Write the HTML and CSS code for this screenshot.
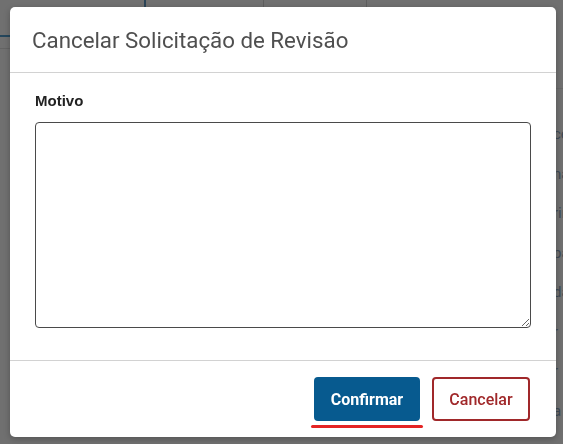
FILE: index.html
```html
<!DOCTYPE html>
<html lang="pt-BR">
<head>
<meta charset="utf-8">
<title>Cancelar Solicitação de Revisão</title>
<link rel="stylesheet" href="styles.css">
</head>
<body>
<div class="page">
  <div class="top-strip">
    <div class="cell cell-a"></div>
    <div class="cell cell-b"></div>
    <div class="cell cell-c"></div>
    <div class="cell cell-d"></div>
  </div>
  <div class="content">
    <div class="left-rail">
      <div class="rail-tab"></div>
      <div class="rail-line"></div>
    </div>
    <div class="main"></div>
    <div class="side">
      <div class="side-head"></div>
      <div class="side-list">
        <div class="side-row">ce</div>
        <div class="side-row">na</div>
        <div class="side-row">rin</div>
        <div class="side-row">pa</div>
        <div class="side-row">da</div>
        <div class="side-row">r</div>
        <div class="side-row">r</div>
        <div class="side-row">a</div>
      </div>
    </div>
  </div>
</div>

<div class="modal" role="dialog" aria-labelledby="modal-title">
  <div class="modal-header">
    <h2 id="modal-title" class="modal-title">Cancelar Solicitação de Revisão</h2>
  </div>
  <div class="modal-body">
    <label class="field-label" for="motivo">Motivo</label>
    <textarea id="motivo" class="field-textarea"></textarea>
  </div>
  <div class="modal-footer">
    <button class="btn btn-primary">Confirmar</button>
    <button class="btn btn-outline">Cancelar</button>
  </div>
  <div class="highlight-mark"></div>
</div>
</body>
</html>
```

FILE: styles.css
```css
html, body {
  margin: 0;
  padding: 0;
}
body {
  width: 563px;
  height: 444px;
  overflow: hidden;
  background: #707070;
  font-family: Roboto, "Liberation Sans", sans-serif;
}

/* dimmed page behind the dialog */
.page {
  display: flex;
  flex-direction: column;
  height: 444px;
}
.top-strip {
  display: flex;
  height: 8px;
}
.cell {
  border-right: 1px solid #5e5e5e;
}
.cell-a { width: 144px; border-right: 2px solid #2b4457; }
.cell-b { width: 117px; }
.cell-c { width: 102px; }
.cell-d { flex: 1; border-right: none; }

.content {
  flex: 1;
  display: flex;
}
.left-rail {
  width: 10px;
  padding-top: 27px;
}
.rail-tab {
  height: 2px;
  background: #24465c;
}
.rail-line {
  margin-top: 11px;
  height: 1px;
  background: #646464;
}
.main {
  flex: 1;
}
.side {
  width: 10px;
}
.side-head {
  height: 80px;
  border-bottom: 1px solid #686868;
}
.side-list {
  padding-top: 26px;
}
.side-row {
  height: 39.5px;
  line-height: 39.5px;
  font-size: 15px;
  color: #3e4a55;
  white-space: nowrap;
}

/* dialog */
.modal {
  position: fixed;
  left: 10px;
  top: 7px;
  width: 546px;
  height: 430px;
  background: #fff;
  border-radius: 5px;
  box-shadow: 0 2px 6px rgba(0,0,0,0.25);
  display: flex;
  flex-direction: column;
}
.modal-header {
  height: 65px;
  border-bottom: 1px solid #d2d2d2;
  display: flex;
  align-items: center;
  padding: 0 23px 0 22px;
}
.modal-title {
  margin: 0;
  font-size: 22.3px;
  font-weight: 400;
  color: #4f4f4f;
}
.modal-body {
  padding: 19px 25px 32px 25px;
  display: flex;
  flex-direction: column;
  border-bottom: 1px solid #d2d2d2;
}
.field-label {
  font-family: "Liberation Sans", Arial, sans-serif;
  font-weight: 700;
  font-size: 15px;
  line-height: 18px;
  color: #222;
  margin-bottom: 12px;
}
.field-textarea {
  box-sizing: border-box;
  width: 496px;
  height: 206px;
  border: 1px solid #4a4a4a;
  border-radius: 4px;
  margin: 0;
  padding: 6px;
  resize: both;
  font-family: inherit;
}
.modal-footer {
  flex: 1;
  display: flex;
  justify-content: flex-end;
  align-items: flex-start;
  gap: 12px;
  padding: 16px 26px 0 0;
}
.btn {
  height: 44px;
  border-radius: 4px;
  font-family: Roboto, "Liberation Sans", sans-serif;
  font-size: 16px;
  cursor: pointer;
  box-sizing: border-box;
}
.btn-primary {
  width: 106px;
  background: #075a8f;
  border: none;
  color: #fff;
  font-weight: 700;
}
.btn-outline {
  width: 98px;
  background: #fff;
  border: 2px solid #a0282a;
  color: #a0282a;
  font-weight: 500;
}
.highlight-mark {
  position: absolute;
  left: 301px;
  top: 418px;
  width: 112px;
  height: 3px;
  border-radius: 2px;
  background: #e42424;
}
```
